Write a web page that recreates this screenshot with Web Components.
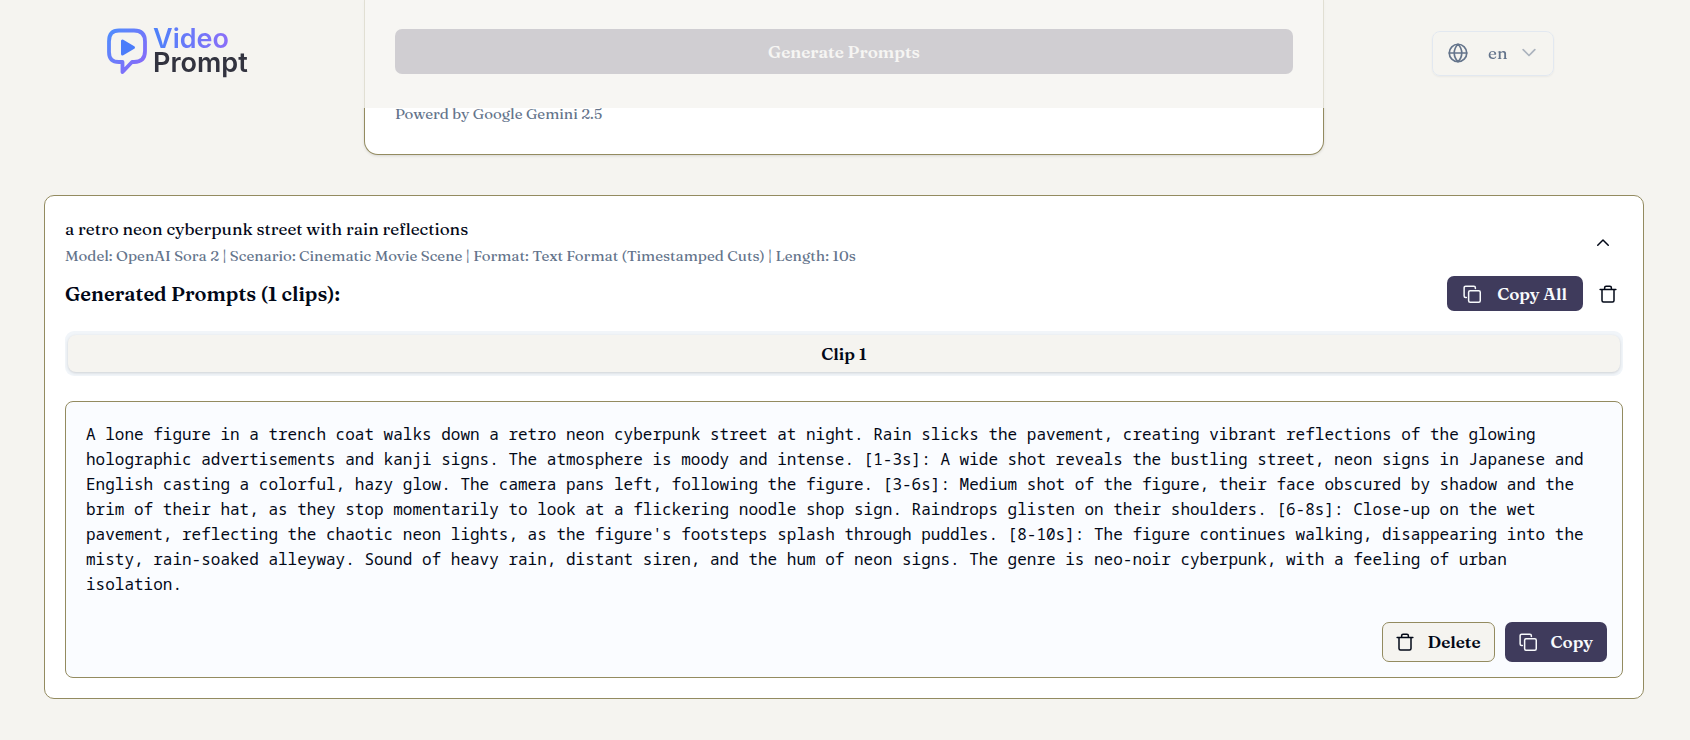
<!DOCTYPE html>
<html lang="en">
<head>
<meta charset="utf-8">
<meta name="viewport" content="width=device-width, initial-scale=1">
<title>Video Prompt</title>
<style>
  :root {
    --paper: #f5f4f0; --ink: #020817; --muted: #64748b;
    --olive: #938b60; --plum: #3f3b5c; --mist: #f1f5f9;
    --serif: Fraunces, 'Liberation Serif', serif;
  }
  body { margin: 0; background: var(--paper); color: var(--ink); font-family: var(--serif); }
  main { display: block; padding: 0 46px 40px 44px; }
</style>
</head>
<body>
<site-header></site-header>
<main>
  <generator-card note="Powerd by Google Gemini 2.5"></generator-card>
  <result-card
    heading="a retro neon cyberpunk street with rain reflections"
    details="Model: OpenAI Sora 2 | Scenario: Cinematic Movie Scene | Format: Text Format (Timestamped Cuts) | Length: 10s">
    <prompt-clip>A lone figure in a trench coat walks down a retro neon cyberpunk street at night. Rain slicks the pavement, creating vibrant reflections of the glowing holographic advertisements and kanji signs. The atmosphere is moody and intense. [1-3s]: A wide shot reveals the bustling street, neon signs in Japanese and English casting a colorful, hazy glow. The camera pans left, following the figure. [3-6s]: Medium shot of the figure, their face obscured by shadow and the brim of their hat, as they stop momentarily to look at a flickering noodle shop sign. Raindrops glisten on their shoulders. [6-8s]: Close-up on the wet pavement, reflecting the chaotic neon lights, as the figure's footsteps splash through puddles. [8-10s]: The figure continues walking, disappearing into the misty, rain-soaked alleyway. Sound of heavy rain, distant siren, and the hum of neon signs. The genre is neo-noir cyberpunk, with a feeling of urban isolation.</prompt-clip>
  </result-card>
</main>

<script>
// Stroke icons on a 24px grid, sized by whoever places them.
const ICONS = {
  globe: '<circle cx="12" cy="12" r="10.500"/><path d="M1.500 12h21M12 1.500c-6 6-6 15 0 21M12 1.500c6 6 6 15 0 21"/>',
  down: '<path d="m5 8 7 7 7-7"/>',
  up: '<path d="m5 15 7-7 7 7"/>',
  copy: '<rect x="7.500" y="7.500" width="15.500" height="15.500" rx="2"/><path d="M4.500 16.500h-1a2 2 0 0 1-2-2v-11a2 2 0 0 1 2-2h11a2 2 0 0 1 2 2v1"/>',
  trash: '<path d="M1.500 6h21M4 6v14.500a2 2 0 0 0 2 2h12a2 2 0 0 0 2-2V6M7.500 6V3.500a2 2 0 0 1 2-2h5a2 2 0 0 1 2 2V6"/>',
};

class UiIcon extends HTMLElement {
  connectedCallback() {
    this.attachShadow({ mode: 'open' }).innerHTML = `
      <style>
        :host { display: inline-flex; width: 20px; height: 20px; flex: none; }
        svg { width: 100%; height: 100%; fill: none; stroke: currentColor; stroke-width: 2;
              stroke-linecap: round; stroke-linejoin: round; }
      </style>
      <svg viewBox="0 0 24 24" aria-hidden="true">${ICONS[this.getAttribute('name')]}</svg>`;
  }
}
customElements.define('ui-icon', UiIcon);

// <ui-button icon="copy" variant="solid|outline|ghost" size="sm|lg">Label</ui-button>
class UiButton extends HTMLElement {
  connectedCallback() {
    const icon = this.getAttribute('icon');
    const label = this.getAttribute('label');
    this.attachShadow({ mode: 'open' }).innerHTML = `
      <style>
        :host { display: inline-flex; flex: none; }
        button { flex: 1; display: flex; align-items: center; justify-content: center; gap: 14px;
                 height: 40px; padding: 0 13px; border: 1px solid transparent; border-radius: 7px;
                 box-sizing: border-box; font: 600 17px/24px var(--serif);
                 color: inherit; background: none; cursor: pointer; }
        ui-icon { width: 18px; height: 18px; }
        :host([variant=solid]) button { background: var(--plum); color: #f8fafc; }
        :host([variant=outline]) button { background: var(--paper); border-color: var(--olive); }
        :host([size=sm]) button { height: 35px; gap: 16px; padding: 0 15px; }
        :host([size=lg]) button { height: 45px; }
        :host([variant=ghost]) button { padding: 0 5px; }
      </style>
      <button type="button"${label ? ` aria-label="${label}"` : ''}>
        ${icon ? `<ui-icon name="${icon}"></ui-icon>` : ''}<slot></slot>
      </button>`;
  }
}
customElements.define('ui-button', UiButton);

class SiteHeader extends HTMLElement {
  connectedCallback() {
    this.attachShadow({ mode: 'open' }).innerHTML = `
      <style>
        :host { display: block; position: fixed; top: 0; left: 0; right: 0; z-index: 10; }
        header { display: flex; align-items: center; justify-content: space-between;
                 height: 108px; padding: 0 136px 2px 106px; box-sizing: border-box;
                 background: rgba(245, 244, 240, 0.8); }
        .logo { display: flex; align-items: center; gap: 5px; padding-bottom: 4px; text-decoration: none;
                font: 600 27px/24px Inter, 'Liberation Sans', sans-serif; color: #32333f; }
        .logo svg { width: 42px; height: 48px; }
        .logo span { display: block; }
        .video { width: max-content; color: transparent; -webkit-background-clip: text; background-clip: text;
                 background-image: linear-gradient(90deg, #4c82fa, #8b6ef8); }
        .lang { display: flex; align-items: center; height: 45px; width: 122px; padding: 0 15px;
                box-sizing: border-box; border: 1px solid #e2e8f0; border-radius: 8px;
                background: none; color: var(--muted); box-shadow: 0 1px 2px rgba(0, 0, 0, 0.05);
                font: 500 17px/24px var(--serif); cursor: pointer; }
        .lang span { margin: 0 11px 0 20px; }
        .lang .arrow { opacity: 0.5; }
      </style>
      <header>
        <a class="logo" href="/">
          <svg viewBox="0 0 42 48" fill="none" aria-hidden="true">
            <defs>
              <linearGradient id="bubble" x1="2" y1="4" x2="40" y2="40" gradientUnits="userSpaceOnUse">
                <stop stop-color="#4f8dfd"/><stop offset="1" stop-color="#8b68f8"/>
              </linearGradient>
            </defs>
            <path d="M13 3.500H28Q39 3.500 39 14.500V24Q39 35 28 35H26L16.500 45V35H13Q3 35 3 25V14.500Q3 3.500 13 3.500Z"
              stroke="url(#bubble)" stroke-width="3.800" stroke-linejoin="round"/>
            <path d="M16.500 14v13L27.500 20.500Z" fill="#4c7dfa" stroke="#4c7dfa" stroke-width="3" stroke-linejoin="round"/>
          </svg>
          <span><span class="video">Video</span><span>Prompt</span></span>
        </a>
        <button class="lang" type="button" aria-haspopup="listbox">
          <ui-icon name="globe"></ui-icon><span>en</span><ui-icon class="arrow" name="down"></ui-icon>
        </button>
      </header>`;
  }
}
customElements.define('site-header', SiteHeader);

// Bottom end of the generator form, scrolled under the header.
class GeneratorCard extends HTMLElement {
  connectedCallback() {
    this.attachShadow({ mode: 'open' }).innerHTML = `
      <style>
        :host { display: block; max-width: 960px; margin: 0 auto 40px; box-sizing: border-box;
                padding: 29px 30px; background: #fff; border: 1px solid var(--olive);
                border-top: 0; border-radius: 0 0 14px 14px; box-shadow: 0 1px 3px rgba(0, 0, 0, 0.12); }
        ui-button { display: flex; }
        p { margin: 29px 0 0; font-size: 15px; line-height: 22px; color: var(--muted); }
      </style>
      <ui-button variant="solid" size="lg">Generate Prompts</ui-button>
      <p>${this.getAttribute('note')}</p>`;
  }
}
customElements.define('generator-card', GeneratorCard);

class ResultCard extends HTMLElement {
  connectedCallback() {
    this.attachShadow({ mode: 'open' }).innerHTML = `
      <style>
        :host { display: block; padding: 20px; background: #fff;
                border: 1px solid var(--olive); border-radius: 10px; }
        .row { display: flex; align-items: center; justify-content: space-between; }
        h2, h3, p { margin: 0; }
        h2 { font-size: 17px; line-height: 26px; font-weight: 500; }
        p { font-size: 15px; line-height: 28px; color: var(--muted); }
        h3 { font-size: 20px; line-height: 28px; font-weight: 600; }
        .actions { margin-top: 6px; }
        .tools { display: flex; align-items: center; gap: 10px; }
        .toggle { margin-right: 5px; }
        .tabs { display: flex; margin: 20px 0 25px; padding: 4px 3px; background: var(--mist); border-radius: 9px; }
        .tabs button { flex: 1; height: 37px; border: 0; border-radius: 8px; background: var(--paper);
                       color: inherit; font: 600 17px/24px var(--serif);
                       box-shadow: 0 1px 3px rgba(0, 0, 0, 0.15); cursor: pointer; }
      </style>
      <div class="row">
        <div>
          <h2>${this.getAttribute('heading')}</h2>
          <p>${this.getAttribute('details')}</p>
        </div>
        <ui-button class="toggle" variant="ghost" icon="up" label="Collapse"></ui-button>
      </div>
      <div class="row actions">
        <h3>Generated Prompts (1 clips):</h3>
        <div class="tools">
          <ui-button variant="solid" size="sm" icon="copy">Copy All</ui-button>
          <ui-button variant="ghost" size="sm" icon="trash" label="Delete all"></ui-button>
        </div>
      </div>
      <div class="tabs" role="tablist"><button type="button" role="tab" aria-selected="true">Clip 1</button></div>
      <slot></slot>`;
  }
}
customElements.define('result-card', ResultCard);

class PromptClip extends HTMLElement {
  connectedCallback() {
    this.attachShadow({ mode: 'open' }).innerHTML = `
      <style>
        :host { display: block; padding: 20px 15px 15px 20px; background: #fafcff;
                border: 1px solid var(--olive); border-radius: 8px; }
        p { margin: 0 5px 25px 0; font: 16px/25px 'Noto Sans Mono', 'Liberation Mono', monospace; }
        .buttons { display: flex; justify-content: flex-end; gap: 10px; }
      </style>
      <p><slot></slot></p>
      <div class="buttons">
        <ui-button variant="outline" icon="trash">Delete</ui-button>
        <ui-button variant="solid" icon="copy">Copy</ui-button>
      </div>`;
  }
}
customElements.define('prompt-clip', PromptClip);
</script>
</body>
</html>
